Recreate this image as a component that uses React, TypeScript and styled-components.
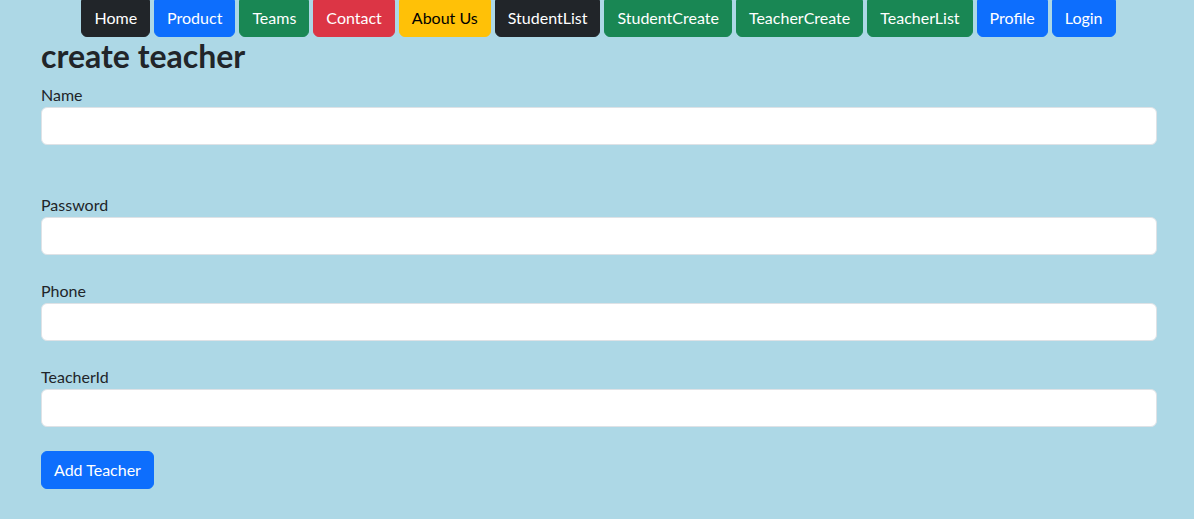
import React from 'react'
import styled, { createGlobalStyle } from 'styled-components'

const GlobalStyle = createGlobalStyle`
  html, body {
    margin: 0;
    padding: 0;
    background: #add8e6;
    font-family: Lato, "Segoe UI", Arial, sans-serif;
    color: #212529;
    font-size: 16px;
    line-height: 1.5;
  }
  * { box-sizing: border-box; }
`

const colors: Record<string, { bg: string; fg: string }> = {
  dark: { bg: '#212529', fg: '#fff' },
  primary: { bg: '#0d6efd', fg: '#fff' },
  success: { bg: '#198754', fg: '#fff' },
  danger: { bg: '#dc3545', fg: '#fff' },
  warning: { bg: '#ffc107', fg: '#000' },
}

const links: [string, string][] = [
  ['Home', 'dark'],
  ['Product', 'primary'],
  ['Teams', 'success'],
  ['Contact', 'danger'],
  ['About Us', 'warning'],
  ['StudentList', 'dark'],
  ['StudentCreate', 'success'],
  ['TeacherCreate', 'success'],
  ['TeacherList', 'success'],
  ['Profile', 'primary'],
  ['Login', 'primary'],
]

function App() {
  return (
    <>
      <GlobalStyle />
      <Nav>
        {links.map(([label, v]) => (
          <NavBtn key={label} $variant={v}>{label}</NavBtn>
        ))}
      </Nav>
      <Container>
        <Title>create teacher</Title>
        <Field $gap={48}>
          <Label>Name</Label>
          <Input type="text" />
        </Field>
        <Field $gap={24}>
          <Label>Password</Label>
          <Input type="password" />
        </Field>
        <Field $gap={24}>
          <Label>Phone</Label>
          <Input type="text" />
        </Field>
        <Field $gap={24}>
          <Label>TeacherId</Label>
          <Input type="text" />
        </Field>
        <Submit>Add Teacher</Submit>
      </Container>
    </>
  )
}

export default App

const Nav = styled.nav`
  display: flex;
  justify-content: center;
  gap: 4px;
  padding-left: 3px;
  height: 37px;
  overflow: hidden;
`

const NavBtn = styled.button<{ $variant: string }>`
  font-family: inherit;
  font-size: 16px;
  line-height: 24px;
  padding: 5px 12px 7px;
  height: 37px;
  border: 1px solid ${p => colors[p.$variant].bg};
  border-radius: 0 0 6px 6px;
  background: ${p => colors[p.$variant].bg};
  color: ${p => colors[p.$variant].fg};
  white-space: nowrap;
  cursor: pointer;
`

const Container = styled.div`
  padding: 0 37px 0 41px;
`

const Title = styled.h2`
  margin: 0 0 8px;
  font-size: 32px;
  font-weight: 700;
  line-height: 38px;
`

const Field = styled.div<{ $gap: number }>`
  margin-bottom: ${p => p.$gap}px;
`

const Label = styled.label`
  display: block;
  font-size: 16px;
  line-height: 24px;
`

const Input = styled.input`
  display: block;
  width: 100%;
  height: 38px;
  padding: 6px 12px;
  font-family: inherit;
  font-size: 16px;
  background: #fff;
  border: 1px solid #dee2e6;
  border-radius: 6px;
  outline: none;
`

const Submit = styled.button`
  font-family: inherit;
  font-size: 16px;
  line-height: 24px;
  height: 38px;
  padding: 6px 12px;
  border: 1px solid #0d6efd;
  border-radius: 6px;
  background: #0d6efd;
  color: #fff;
  cursor: pointer;
`
